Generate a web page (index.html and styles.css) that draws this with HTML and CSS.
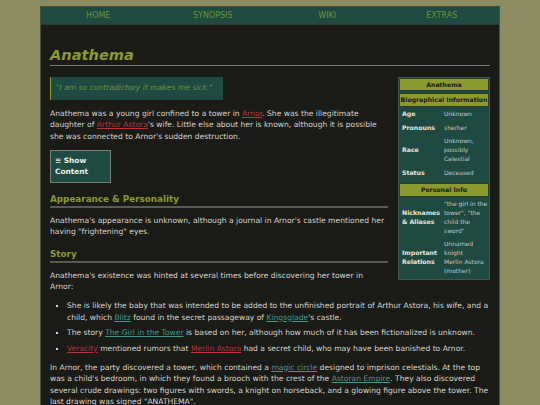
FILE: index.html
```html
<!DOCTYPE html>
<html>
<head>
<meta charset="utf-8">
<link rel="stylesheet" href="styles.css">
</head>
<body>
<div class="page">
  <nav class="nav">
    <a href="#">HOME</a>
    <a href="#">SYNOPSIS</a>
    <a href="#">WIKI</a>
    <a href="#">EXTRAS</a>
  </nav>
  <main class="main">
    <h1 class="title">Anathema</h1>
    <aside class="infobox">
      <div class="ib-title">Anathema</div>
      <div class="ib-head">Biographical Information</div>
      <div class="ib-rows">
        <div class="ib-row"><span class="ib-l">Age</span><span class="ib-v">Unknown</span></div>
        <div class="ib-row"><span class="ib-l">Pronouns</span><span class="ib-v">she/her</span></div>
        <div class="ib-row"><span class="ib-l">Race</span><span class="ib-v">Unknown, possibly Celestial</span></div>
        <div class="ib-row"><span class="ib-l">Status</span><span class="ib-v">Deceased</span></div>
      </div>
      <div class="ib-head">Personal Info</div>
      <div class="ib-rows">
        <div class="ib-row"><span class="ib-l">Nicknames &amp; Aliases</span><span class="ib-v">"the girl in the tower", "the child the sword"</span></div>
        <div class="ib-row"><span class="ib-l">Important Relations</span><span class="ib-v">Unnamed knight<br>Merlin Astora (mother)</span></div>
      </div>
    </aside>
    <div class="quote">"I am so contradictory it makes me sick."</div>
    <p>Anathema was a young girl confined to a tower in <a class="red" href="#">Arnor</a>. She was the illegitimate daughter of <a class="red" href="#">Arthur Astora</a>'s wife. Little else about her is known, although it is possible she was connected to Arnor's sudden destruction.</p>
    <div class="toggle">&#8801; Show<br>Content</div>
    <h2>Appearance &amp; Personality</h2>
    <p>Anathema's appearance is unknown, although a journal in Arnor's castle mentioned her having "frightening" eyes.</p>
    <h2>Story</h2>
    <p>Anathema's existence was hinted at several times before discovering her tower in Arnor:</p>
    <ul>
      <li>She is likely the baby that was intended to be added to the unfinished portrait of Arthur Astora, his wife, and a child, which <a class="teal" href="#">Blitz</a> found in the secret passageway of <a class="teal" href="#">Kingsglade</a>'s castle.</li>
      <li>The story <a class="teal" href="#">The Girl in the Tower</a> is based on her, although how much of it has been fictionalized is unknown.</li>
      <li><a class="red" href="#">Veracity</a> mentioned rumors that <a class="red" href="#">Merlin Astora</a> had a secret child, who may have been banished to Arnor.</li>
    </ul>
    <p>In Arnor, the party discovered a tower, which contained a <a class="teal" href="#">magic circle</a> designed to imprison celestials. At the top was a child's bedroom, in which they found a brooch with the crest of the <a class="teal" href="#">Astoran Empire</a>. They also discovered several crude drawings: two figures with swords, a knight on horseback, and a glowing figure above the tower. The last drawing was signed "ANATHEMA".</p>
  </main>
</div>
</body>
</html>
```
FILE: styles.css
```css
html, body {
  margin: 0;
  padding: 0;
  background: #8d8b62;
  height: 100%;
  overflow: hidden;
}
body {
  font-family: "DejaVu Sans", Verdana, sans-serif;
  font-size: 7.6px;
  color: #d6d6cc;
}
.page {
  margin: 6px 0 0 40px;
  width: 458px;
  border: 1px solid #4c4d3c;
  border-bottom: none;
  background: #1a1a16;
  min-height: 420px;
}
.nav {
  display: grid;
  grid-template-columns: repeat(4, 1fr);
  background: #1f4a41;
  height: 17px;
  align-items: center;
  border-bottom: 1px solid #2b3b30;
}
.nav a {
  text-align: center;
  color: #6a9438;
  text-decoration: none;
  font-size: 8px;
}
.main {
  padding: 20px 9px 0 9px;
}
.title {
  margin: 0 0 11px 0;
  font-size: 14.6px;
  font-weight: bold;
  font-style: italic;
  color: #8a9a2e;
  line-height: 20px;
  border-bottom: 1px solid #7a7a72;
}
.infobox {
  float: right;
  width: 90px;
  margin: 0 0 0 10px;
  background: #1f4a41;
  border: 1px solid #45544a;
  font-size: 6.2px;
}
.ib-title, .ib-head {
  background: #8b9a2e;
  color: #1a1a16;
  font-weight: bold;
  text-align: center;
  border: 1px solid #2b3b30;
}
.ib-title { line-height: 11px; }
.ib-head { margin-top: 2px; line-height: 12px; }
.ib-rows { padding: 1px 0 1px; }
.ib-row {
  display: grid;
  grid-template-columns: 42px 1fr;
  align-items: center;
  padding: 1.4px 0 1.4px 3px;
  margin-bottom: 1.6px;
  line-height: 9px;
}
.ib-l { font-weight: bold; color: #e6e6dc; }
.ib-v { color: #c4c8c0; font-size: 6px; }
.quote {
  width: fit-content;
  background: #1f4a41;
  border-left: 1px solid #8a9a2e;
  color: #6c9240;
  font-style: italic;
  padding: 6px 10px 6px 5px;
  margin: 0 0 8px 0;
  line-height: 10.6px;
}
p {
  margin: 0 0 7.5px 0;
  line-height: 11.5px;
}
a.red { color: #b8343a; }
a.teal { color: #3e9b8c; }
.toggle {
  box-sizing: border-box;
  width: 61px;
  background: #1f4a41;
  border: 1px solid #7a7f78;
  color: #f0f0e8;
  font-weight: bold;
  font-size: 7.4px;
  line-height: 11.5px;
  padding: 4px 4px;
  margin: 0 0 10px 0;
}
h2 {
  overflow: hidden;
  margin: 10px 0 7px 0;
  font-size: 8.8px;
  color: #8a9a2e;
  border-bottom: 2px solid #5a5a55;
  line-height: 12px;
  padding-bottom: 1px;
}
ul {
  margin: 0 0 7.5px 0;
  padding-left: 17px;
  list-style: square;
}
li {
  line-height: 11.5px;
  margin-bottom: 4px;
}
li::marker { font-size: 6px; }
```
